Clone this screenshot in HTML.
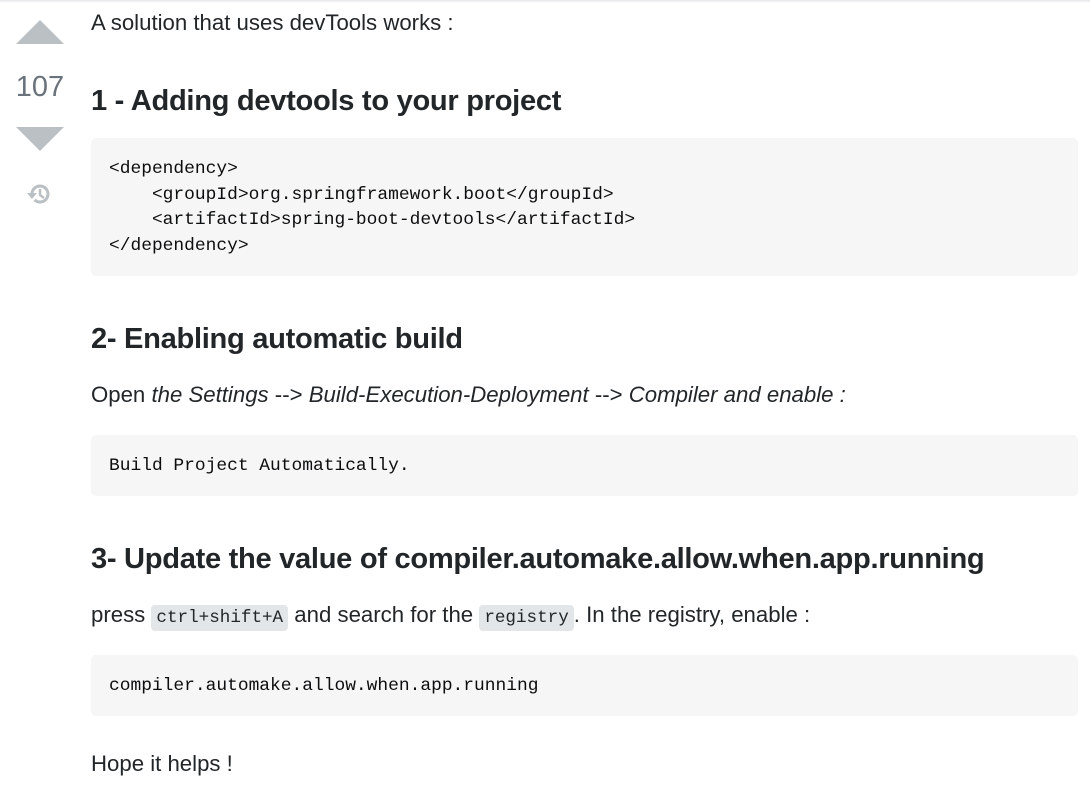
<!DOCTYPE html>
<html><head><meta charset="utf-8"><style>
body{margin:0;width:1090px;height:787px;background:#fff;position:relative;overflow:hidden;font-family:"Liberation Sans",sans-serif;color:#232629}
.t{position:absolute;left:91px;white-space:nowrap;font-size:22.2px;line-height:30px}
.h{position:absolute;left:91px;white-space:nowrap;font-size:29.1px;font-weight:bold;line-height:36px;letter-spacing:-0.3px}
.pre{position:absolute;left:91px;width:987px;background:#f6f6f6;border-radius:5px}
.m{font-family:"Liberation Mono",monospace;font-size:17.9px;white-space:pre;position:absolute;left:109px;line-height:25.7px;color:#0c0d0e}
.c{font-family:"Liberation Mono",monospace;font-size:17.6px;background:#e3e6e8;border-radius:4px;padding:3px 5px}
.top{position:absolute;left:0;top:0;width:1090px;height:3px;background:linear-gradient(#e4e6e8,#fff)}
</style></head><body>
<div class="top"></div>
<svg style="position:absolute;left:16px;top:20px" width="48" height="25"><polygon points="0,24 24,0 48,24" fill="#bbc0c4"/></svg>
<div style="position:absolute;left:0;width:80px;text-align:center;top:69px;font-size:29px;color:#6a737c;line-height:36px">107</div>
<svg style="position:absolute;left:16px;top:127px" width="48" height="25"><polygon points="0,0 48,0 24,24" fill="#bbc0c4"/></svg>
<svg style="position:absolute;left:25px;top:180px" width="28" height="28" viewBox="0 0 28 28"><path d="M7 14a8 8 0 1 1 2.5 5.8" fill="none" stroke="#bbc0c4" stroke-width="3"/><polygon points="2,13 12,13 7,19" fill="#bbc0c4"/><path d="M15 9v6l4 3" fill="none" stroke="#bbc0c4" stroke-width="2.5"/></svg>

<div class="t" style="top:8px">A solution that uses devTools works :</div>
<div class="h" style="top:83px">1 - Adding devtools to your project</div>
<div class="pre" style="top:138px;height:138px"></div>
<div class="m" style="top:157px">&lt;dependency&gt;
    &lt;groupId&gt;org.springframework.boot&lt;/groupId&gt;
    &lt;artifactId&gt;spring-boot-devtools&lt;/artifactId&gt;
&lt;/dependency&gt;</div>
<div class="h" style="top:321px">2- Enabling automatic build</div>
<div class="t" style="top:380px">Open <i>the Settings</i> --&gt; <i>Build-Execution-Deployment</i> --&gt; <i>Compiler and enable :</i></div>
<div class="pre" style="top:435px;height:61px"></div>
<div class="m" style="top:454px">Build Project Automatically.</div>
<div class="h" style="top:541px">3- Update the value of compiler.automake.allow.when.app.running</div>
<div class="t" style="top:600px">press <span class="c">ctrl+shift+A</span> and search for the <span class="c">registry</span>. In the registry, enable :</div>
<div class="pre" style="top:655px;height:61px"></div>
<div class="m" style="top:674px">compiler.automake.allow.when.app.running</div>
<div class="t" style="top:749px">Hope it helps !</div>
</body></html>
